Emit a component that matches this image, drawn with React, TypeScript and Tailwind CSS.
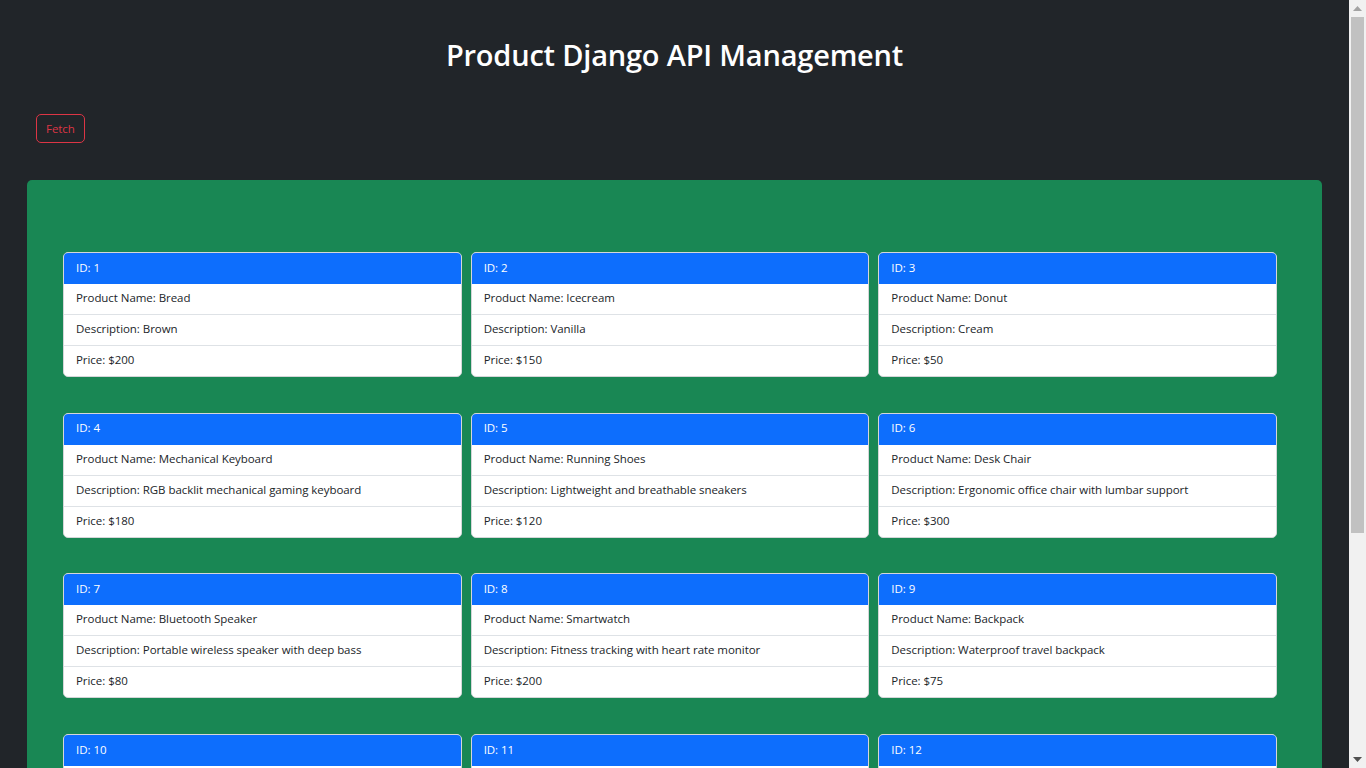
import React from "react";

type Product = {
  id: number;
  name: string;
  description: string;
  price: number;
};

// sample data, as returned by the django api
const products: Product[] = [
  { id: 1, name: "Bread", description: "Brown", price: 200 },
  { id: 2, name: "Icecream", description: "Vanilla", price: 150 },
  { id: 3, name: "Donut", description: "Cream", price: 50 },
  { id: 4, name: "Mechanical Keyboard", description: "RGB backlit mechanical gaming keyboard", price: 180 },
  { id: 5, name: "Running Shoes", description: "Lightweight and breathable sneakers", price: 120 },
  { id: 6, name: "Desk Chair", description: "Ergonomic office chair with lumbar support", price: 300 },
  { id: 7, name: "Bluetooth Speaker", description: "Portable wireless speaker with deep bass", price: 80 },
  { id: 8, name: "Smartwatch", description: "Fitness tracking with heart rate monitor", price: 200 },
  { id: 9, name: "Backpack", description: "Waterproof travel backpack", price: 75 },
  { id: 10, name: "Wireless Mouse", description: "Ergonomic mouse with silent clicks", price: 40 },
  { id: 11, name: "Coffee Maker", description: "Programmable drip coffee machine", price: 95 },
  { id: 12, name: "Yoga Mat", description: "Non-slip exercise mat", price: 30 },
  { id: 13, name: "Desk Lamp", description: "LED lamp with adjustable brightness", price: 45 },
  { id: 14, name: "Headphones", description: "Noise cancelling over-ear headphones", price: 220 },
  { id: 15, name: "Water Bottle", description: "Insulated stainless steel bottle", price: 25 },
];

function ProductCard({ product }: { product: Product }) {
  return (
    <div className="overflow-hidden rounded-[5px] border border-[#d4d6d8] bg-white">
      <div className="flex h-[31px] items-center bg-[#0d6efd] px-[12px] pb-[2px] text-white">
        ID: {product.id}
      </div>
      <ul className="divide-y divide-[#dee2e6]">
        <li className="flex h-[31px] items-center px-[12px] pb-[2px]">Product Name: {product.name}</li>
        <li className="flex h-[31px] items-center px-[12px] pb-[2px]">Description: {product.description}</li>
        <li className="flex h-[30px] items-center px-[12px] pb-[2px]">Price: ${product.price}</li>
      </ul>
    </div>
  );
}

// the window scrollbar seen in the screenshot
function Scrollbar() {
  return (
    <div className="sticky top-0 flex h-screen w-[17px] shrink-0 flex-col bg-[#f1f1f1]">
      <div className="flex h-[17px] items-center justify-center">
        <svg width="9" height="5" viewBox="0 0 9 5">
          <path d="M4.5 0L9 5H0z" fill="#a3a3a3" />
        </svg>
      </div>
      <div className="flex-1 px-[2px]">
        <div className="h-[516px] bg-[#c1c1c1]" />
      </div>
      <div className="flex h-[17px] items-center justify-center">
        <svg width="9" height="5" viewBox="0 0 9 5">
          <path d="M0 0h9L4.5 5z" fill="#505050" />
        </svg>
      </div>
    </div>
  );
}

export default function App() {
  return (
    <div className="flex bg-[#212529]">
      <div className="min-h-screen min-w-0 flex-1 pb-[27px] font-['Open_Sans',sans-serif] text-[11.5px] leading-[18px] tracking-[-0.05px] text-[#212529]">
        <h1 className="pt-[37px] text-center text-[29px] font-semibold leading-[36px] tracking-[-0.2px] text-white">
          Product Django API Management
        </h1>

        <div className="px-[36px] pt-[41px]">
          <button className="h-[29px] rounded-[5px] border border-[#dc3545] px-[9px] text-[11.5px] text-[#dc3545] hover:bg-[#dc3545] hover:text-white">
            Fetch
          </button>
        </div>

        <div className="mx-[27px] mt-[37px] rounded-[5px] bg-[#198754] pb-[46px] pl-[36px] pr-[45px] pt-[72px]">
          <div className="grid grid-cols-3 gap-x-[9px] gap-y-[35.7px]">
            {products.map((p) => (
              <ProductCard key={p.id} product={p} />
            ))}
          </div>
        </div>
      </div>
      <Scrollbar />
    </div>
  );
}
